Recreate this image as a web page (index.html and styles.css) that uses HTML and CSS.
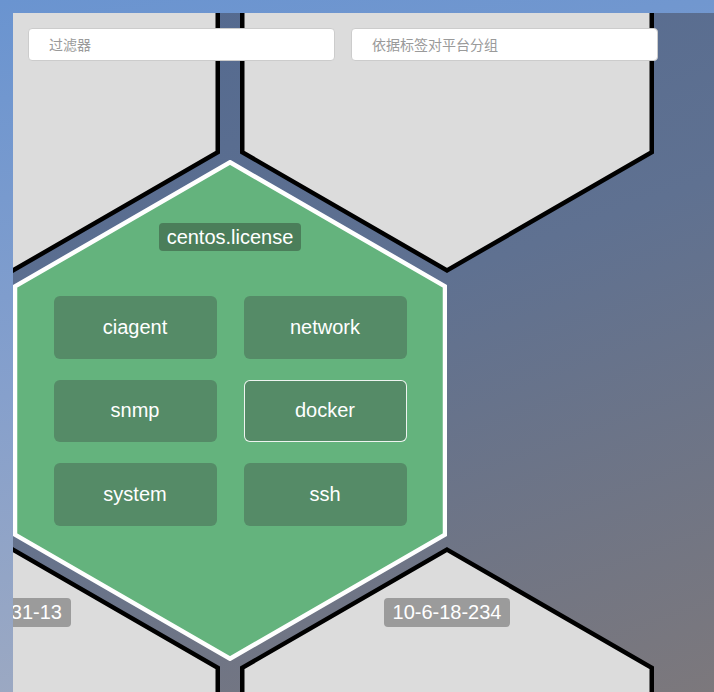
FILE: index.html
```
<!DOCTYPE html>
<html lang="zh-CN">
<head>
    <meta charset="UTF-8">
    <meta name="viewport" content="width=device-width, initial-scale=1.0">
    <title>Platforms</title>
    <link rel="stylesheet" href="styles.css">
</head>
<body>
    <div class="stage">
        <div class="hex hex-grey pos-tl">
            <svg class="hex-shape" viewBox="0 0 414 478"><polygon points="207,2.6 411.75,120.8 411.75,357.2 207,475.4 2.25,357.2 2.25,120.8"/></svg>
        </div>
        <div class="hex hex-grey pos-tr">
            <svg class="hex-shape" viewBox="0 0 414 478"><polygon points="207,2.6 411.75,120.8 411.75,357.2 207,475.4 2.25,357.2 2.25,120.8"/></svg>
        </div>
        <div class="hex hex-grey pos-bl">
            <svg class="hex-shape" viewBox="0 0 414 478"><polygon points="207,2.6 411.75,120.8 411.75,357.2 207,475.4 2.25,357.2 2.25,120.8"/></svg>
            <div class="hex-body"><span class="tag">10-6-31-13</span></div>
        </div>
        <div class="hex hex-grey pos-br">
            <svg class="hex-shape" viewBox="0 0 414 478"><polygon points="207,2.6 411.75,120.8 411.75,357.2 207,475.4 2.25,357.2 2.25,120.8"/></svg>
            <div class="hex-body"><span class="tag">10-6-18-234</span></div>
        </div>

        <div class="hex hex-active pos-center">
            <svg class="hex-shape" viewBox="0 0 434 501"><polygon points="217,2.3 432,126.4 432,374.6 217,498.7 2,374.6 2,126.4"/></svg>
            <div class="hex-body">
                <span class="tag">centos.license</span>
                <div class="plugins">
                    <button>ciagent</button>
                    <button>network</button>
                    <button>snmp</button>
                    <button class="selected">docker</button>
                    <button>system</button>
                    <button>ssh</button>
                </div>
            </div>
        </div>

        <div class="toolbar">
            <input type="text" placeholder="过滤器">
            <input type="text" placeholder="依据标签对平台分组">
        </div>
    </div>
</body>
</html>
```

FILE: styles.css
```
html, body {
    height: 100%;
}

body {
    margin: 0;
    padding: 13px 0 0 13px;
    box-sizing: border-box;
    background: linear-gradient(172deg, #6a94d0 0%, #86a0cc 50%, #a2abbf 100%);
    font-family: "Liberation Sans", Arial, sans-serif;
    overflow: hidden;
}

.stage {
    position: relative;
    width: 100%;
    height: 100%;
    overflow: hidden;
    background: linear-gradient(160deg, #53698f 0%, #5f7191 45%, #7c787c 100%);
}

.toolbar {
    position: absolute;
    top: 15px;
    left: 15px;
    display: flex;
    gap: 16px;
}

.toolbar input {
    width: 307px;
    height: 33px;
    box-sizing: border-box;
    padding: 0 12px 0 20px;
    border: 1px solid #cccccc;
    border-radius: 4px;
    background-color: #fff;
    font-family: "Liberation Sans", "Noto Sans CJK SC", sans-serif;
    font-size: 14px;
    color: #333;
    outline: none;
}

.toolbar input::placeholder {
    color: #9a9a9a;
}

/* hexagon nodes */
.hex {
    position: absolute;
}

.hex-shape {
    position: absolute;
    top: 0;
    left: 0;
    width: 100%;
    height: 100%;
}

.hex-body {
    position: relative;
    display: flex;
    flex-direction: column;
    align-items: center;
}

.hex-grey {
    width: 414px;
    height: 478px;
}

.hex-grey polygon {
    fill: #dcdcdc;
    stroke: #000;
    stroke-width: 4.5;
}

.hex-grey .hex-body {
    padding-top: 51px;
}

.hex-grey .tag {
    background-color: #9b9b9b;
    height: 29px;
    line-height: 29px;
    padding: 0 9px;
}

.pos-tl { left: -207px; top: -218px; }
.pos-tr { left: 227px; top: -218px; }
.pos-bl { left: -207px; top: 534px; }
.pos-br { left: 227px; top: 534px; }

.hex-active {
    width: 434px;
    height: 501px;
    left: 0;
    top: 146.5px;
}

.hex-active polygon {
    fill: #64b37d;
    stroke: #fff;
    stroke-width: 4.5;
}

.hex-active .hex-body {
    padding-top: 63.5px;
}

.tag {
    display: block;
    padding: 0 8px;
    height: 28px;
    line-height: 28px;
    border-radius: 4px;
    background-color: #4b7e5a;
    color: #fff;
    font-size: 20px;
    white-space: nowrap;
}

.plugins {
    margin-top: 45px;
    display: grid;
    grid-template-columns: 163px 163px;
    grid-auto-rows: 62.5px;
    gap: 21px 27px;
}

.plugins button {
    border: 1px solid transparent;
    border-radius: 6px;
    background-color: #558b67;
    color: #fff;
    font-family: "Liberation Sans", Arial, sans-serif;
    font-size: 20px;
    cursor: pointer;
}

.plugins button.selected {
    border-color: rgba(255, 255, 255, 0.9);
}
```
